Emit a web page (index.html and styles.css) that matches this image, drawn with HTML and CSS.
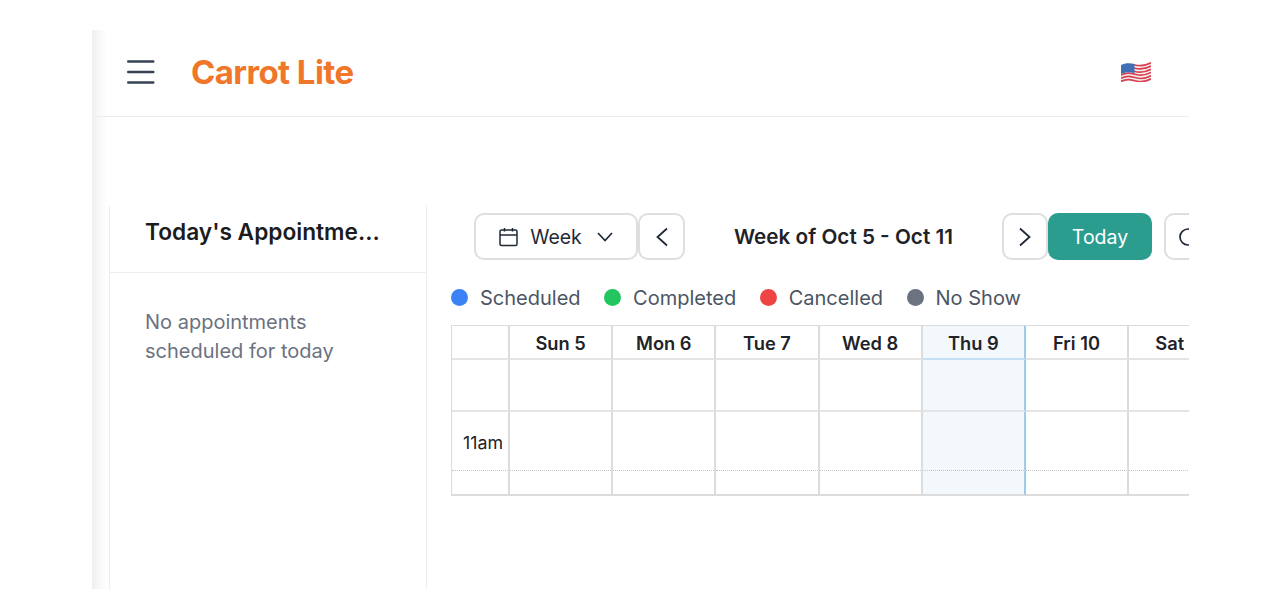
FILE: index.html
```html
<!DOCTYPE html>
<html lang="en">
<head>
    <meta charset="UTF-8">
    <meta name="viewport" content="width=device-width, initial-scale=1.0">
    <title>Carrot Lite</title>
    <link rel="stylesheet" href="styles.css">
</head>
<body>
    <div class="app">
        <header class="topbar">
            <button class="menu-btn" aria-label="Menu">
                <svg width="28" height="24" viewBox="0 0 28 24" fill="none" stroke="#374151" stroke-width="2.4" stroke-linecap="round">
                    <path d="M1.200 1.500H26.300M1.200 12H26.300M1.200 22.500H26.300"/>
                </svg>
            </button>
            <div class="logo">Carrot Lite</div>
            <svg class="flag" width="30" height="21" viewBox="0 0 30 21">
                <path d="M0 4C6 1 10 2 15 3.500C20 5 25 4 30 1V18C25 21 20 22 15 20.500C10 19 5 18 0 21Z" fill="#f4f0f0"/>
                <g fill="none" stroke="#d8404f" stroke-width="1.700">
                    <path d="M13 3.800C19 5.500 25 4.500 30 1.800"/>
                    <path d="M13 7C19 8.700 25 7.700 30 5"/>
                    <path d="M13 10.200C19 11.900 25 10.900 30 8.200"/>
                    <path d="M0 14C6 11 10 12 15 13.500C20 15 25 14 30 11.400"/>
                    <path d="M0 17.300C6 14.300 10 15.300 15 16.800C20 18.300 25 17.300 30 14.700"/>
                    <path d="M0 20.300C6 17.500 10 18.500 15 20C20 21.400 25 20.500 30 17.700"/>
                </g>
                <path d="M0 4C5 1.500 9 2 13.500 3V12.200C9 11 5 10.800 0 13Z" fill="#3f70b5"/>
            </svg>
        </header>

        <main class="content">
            <aside class="today-panel">
                <h2 class="today-title">Today's Appointme...</h2>
                <p class="today-empty">No appointments scheduled for today</p>
            </aside>

            <section class="calendar">
                <div class="toolbar">
                    <button class="tool-btn view-btn">
                        <svg width="19" height="20" viewBox="0 0 19 20" fill="none" stroke="#1f2937" stroke-width="1.500">
                            <rect x="1" y="3" width="17" height="15.500" rx="1.500"/>
                            <path d="M1 8H18M5.500 1V4.500M13.500 1V4.500"/>
                        </svg>
                        <span>Week</span>
                        <svg class="chevron" width="16" height="10" viewBox="0 0 16 10" fill="none" stroke="#1f2937" stroke-width="1.700">
                            <path d="M1 1L8 8.500L15 1"/>
                        </svg>
                    </button>
                    <button class="tool-btn nav-btn" aria-label="Previous">
                        <svg width="12" height="20" viewBox="0 0 12 20" fill="none" stroke="#1f2937" stroke-width="1.800"><path d="M11 1.500L1.500 10L11 18.500"/></svg>
                    </button>
                    <div class="week-label">Week of Oct 5 - Oct 11</div>
                    <button class="tool-btn nav-btn nav-next" aria-label="Next">
                        <svg width="12" height="20" viewBox="0 0 12 20" fill="none" stroke="#1f2937" stroke-width="1.800"><path d="M1 1.500L10.500 10L1 18.500"/></svg>
                    </button>
                    <button class="today-btn">Today</button>
                    <button class="tool-btn refresh-btn" aria-label="Refresh">
                        <svg width="20" height="20" viewBox="0 0 20 20" fill="none" stroke="#1f2937" stroke-width="1.700"><circle cx="10" cy="10" r="8"/></svg>
                    </button>
                </div>

                <div class="legend">
                    <div class="legend-item"><span class="dot dot-blue"></span>Scheduled</div>
                    <div class="legend-item"><span class="dot dot-green"></span>Completed</div>
                    <div class="legend-item"><span class="dot dot-red"></span>Cancelled</div>
                    <div class="legend-item"><span class="dot dot-gray"></span>No Show</div>
                </div>

                <div class="grid">
                    <div class="cell head"></div>
                    <div class="cell head">Sun 5</div>
                    <div class="cell head">Mon 6</div>
                    <div class="cell head">Tue 7</div>
                    <div class="cell head">Wed 8</div>
                    <div class="cell head is-today">Thu 9</div>
                    <div class="cell head">Fri 10</div>
                    <div class="cell head">Sat 11</div>

                    <div class="cell"></div>
                    <div class="cell"></div>
                    <div class="cell"></div>
                    <div class="cell"></div>
                    <div class="cell"></div>
                    <div class="cell is-today"></div>
                    <div class="cell"></div>
                    <div class="cell"></div>

                    <div class="cell hour time">11am</div>
                    <div class="cell hour"></div>
                    <div class="cell hour"></div>
                    <div class="cell hour"></div>
                    <div class="cell hour"></div>
                    <div class="cell hour is-today"></div>
                    <div class="cell hour"></div>
                    <div class="cell hour"></div>

                    <div class="cell half"></div>
                    <div class="cell half"></div>
                    <div class="cell half"></div>
                    <div class="cell half"></div>
                    <div class="cell half"></div>
                    <div class="cell half is-today"></div>
                    <div class="cell half"></div>
                    <div class="cell half"></div>
                </div>
            </section>
        </main>
    </div>
</body>
</html>
```

FILE: styles.css
```css
* {
    box-sizing: border-box;
}
html, body {
    height: 100%;
}
body {
    margin: 0;
    background: #fff;
    font-family: Inter, "Liberation Sans", sans-serif;
    overflow: hidden;
}
.app {
    width: 1097px;
    height: 559px;
    margin: 30px 0 0 92px;
    overflow: hidden;
    background: linear-gradient(to right, #efefef 0, #f7f7f7 6px, #fff 16px) left top / 17px 100% no-repeat;
}
.topbar {
    display: flex;
    align-items: center;
    height: 87px;
    padding: 0 38px 3px 35px;
    border-bottom: 1px solid #ececee;
    background: linear-gradient(to right, #efefef 0, #f7f7f7 6px, #fff 16px);
}
.menu-btn {
    display: flex;
    padding: 0;
    border: none;
    background: none;
}
.logo {
    margin-left: 36px;
    color: #f0762a;
    font-size: 33px;
    font-weight: 700;
    letter-spacing: -0.6px;
}
.flag {
    margin-left: auto;
}
.content {
    display: flex;
    height: 472px;
    padding: 89px 0 0 17px;
}
.today-panel {
    flex: 0 0 318px;
    border-left: 1px solid #eeeef0;
    border-right: 1px solid #eeeef0;
}
.today-title {
    height: 67px;
    margin: 0;
    padding: 9px 35px 0;
    border-bottom: 1px solid #eeeef0;
    color: #1c1c1e;
    font-size: 22.700px;
    font-weight: 600;
    line-height: 34px;
    white-space: nowrap;
}
.today-empty {
    width: 230px;
    margin: 35px 0 0 35px;
    color: #6b7280;
    font-size: 20px;
    line-height: 29px;
}
.calendar {
    flex: none;
    width: 763px;
    overflow: hidden;
    padding: 7px 0 0 24px;
}
.toolbar {
    display: flex;
    align-items: center;
    width: 800px;
    height: 47px;
    margin-left: 23px;
}
.tool-btn {
    display: flex;
    align-items: center;
    justify-content: center;
    height: 47px;
    padding: 0;
    border: 2px solid #dedede;
    border-radius: 10px;
    background: #fff;
    color: #1f2937;
    font-family: inherit;
}
.view-btn {
    width: 164px;
    gap: 12px;
    font-size: 19.500px;
}
.chevron {
    margin-left: 3px;
}
.nav-btn {
    width: 47px;
}
.nav-next {
    width: 46px;
}
.week-label {
    width: 317px;
    color: #1f2328;
    font-size: 20.700px;
    font-weight: 600;
    text-align: center;
}
.today-btn {
    width: 104px;
    height: 47px;
    border: none;
    border-radius: 10px;
    background: #2a9d8f;
    color: #fff;
    font-family: inherit;
    font-size: 19.500px;
}
.refresh-btn {
    width: 47px;
    margin-left: 12px;
}
.legend {
    display: flex;
    gap: 23.500px;
    height: 65px;
    padding-top: 10px;
    align-items: center;
}
.legend-item {
    display: flex;
    align-items: center;
    gap: 12px;
    color: #4b5563;
    font-size: 20px;
}
.dot {
    width: 17px;
    height: 17px;
    border-radius: 50%;
}
.dot-blue {
    background: #3b82f6;
}
.dot-green {
    background: #22c55e;
}
.dot-red {
    background: #ef4444;
}
.dot-gray {
    background: #6b7280;
}
.grid {
    display: grid;
    grid-template-columns: 58px repeat(7, 103.2px);
    grid-template-rows: 34px 52px 59px 25px;
    width: 781px;
    border-top: 1px solid #dcdcdc;
    border-left: 1px solid #dcdcdc;
}
.cell {
    border-right: 2px solid #dcdcdc;
    border-bottom: 2px solid #e4e4e4;
}
.head {
    display: flex;
    align-items: center;
    justify-content: center;
    padding-top: 1px;
    color: #1f2328;
    font-size: 18.300px;
    font-weight: 600;
}
.hour {
    border-bottom: 1px dotted #c4c4c4;
}
.half {
    border-bottom-color: #dcdcdc;
}
.time {
    display: flex;
    align-items: center;
    justify-content: flex-end;
    padding: 2px 5px 0 0;
    color: #1f2328;
    font-size: 17.800px;
}
.is-today {
    background: #f3f8fd;
    border-right-color: #9ccbec;
}
.head.is-today {
    border-bottom-color: #c5e0f4;
}
```
